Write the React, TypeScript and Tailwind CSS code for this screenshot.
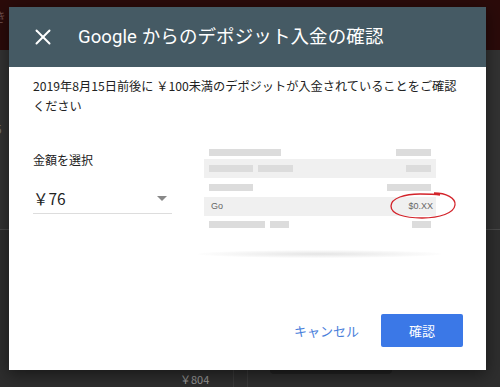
import { X } from "lucide-react";

const jp = { fontFamily: '"Noto Sans CJK JP", "Noto Sans", sans-serif' };

function Bar({ w }: { w: number }) {
  return <div className="h-[7px] bg-[#dcdcdc]" style={{ width: w }} />;
}

// 入金確認のイラスト (ぼかした明細)
function StatementSketch() {
  return (
    <div className="relative w-[232px] flex flex-col">
      <div className="flex justify-between items-center h-[13px] px-[5px]">
        <Bar w={72} />
        <Bar w={35} />
      </div>
      <div className="flex justify-between items-center h-[19px] px-[5px] bg-[#f0f0f0]">
        <div className="flex gap-[5px]">
          <Bar w={44} />
          <Bar w={35} />
        </div>
        <Bar w={25} />
      </div>
      <div className="flex justify-between items-center h-[19px] px-[5px]">
        <Bar w={44} />
        <Bar w={44} />
      </div>
      <div className="relative flex justify-between items-center h-[19px] px-[7px] pr-[3px] bg-[#f0f0f0] text-[9px] text-[#666]" style={{ fontFamily: '"Liberation Sans", sans-serif' }}>
        <span>Go</span>
        <span>$0.XX</span>
        <svg className="absolute left-[184px] top-[-7px]" width="70" height="30" viewBox="0 0 70 30">
          <path d="M46 3 C58 3 68 8 67 15 C66 23 52 28 34 28 C16 28 3 24 3 16 C3 8 17 4 32 4 C40 4 46 4 52 5" fill="none" stroke="#d3232a" strokeWidth="1.3" />
        </svg>
      </div>
      <div className="flex justify-between items-center h-[17px] px-[5px]">
        <div className="flex gap-[5px]">
          <Bar w={56} />
          <Bar w={19} />
        </div>
        <Bar w={19} />
      </div>
      <div className="mt-[17px] mx-[-6px] h-[8px] rounded-[50%] bg-[radial-gradient(ellipse_at_center,#e4e4e4_0%,#f6f6f6_50%,#ffffff_75%)]" />
    </div>
  );
}

export default function App() {
  return (
    <div className="relative w-[500px] h-[387px] overflow-hidden bg-[#2f2f2f]" style={jp}>
      {/* background page behind the modal */}
      <div className="h-[50px] bg-[#2b0b0a] text-[#6a4a48] text-[12px] pl-0 pt-[8px] -ml-[6px]">き</div>
      <div className="h-[180px] bg-[#333333] border-b border-[#4a4a4a] text-[#777] text-[12px] pt-[70px] -ml-[5px]">5</div>
      <div className="relative h-[157px] bg-[#2e2e2e]">
        <div className="absolute left-[180px] top-[141px] text-[11px] text-[#9a9a9a]">￥804</div>
        <div className="absolute left-[233px] top-[140px] w-px h-[20px] bg-[#3a3a3a]" />
        <div className="absolute left-[247px] top-[140px] w-px h-[20px] bg-[#3a3a3a]" />
        <div className="absolute left-[270px] top-[133px] w-[122px] h-[11px] rounded-b-[4px] bg-[#222222]" />
      </div>

      {/* modal */}
      <div className="absolute left-[9px] top-[7px] w-[477px] h-[363px] bg-white flex flex-col shadow-[0_4px_16px_rgba(0,0,0,0.5)]">
        <div className="h-[60px] bg-[#455a64] flex items-center text-white shrink-0">
          <X className="ml-[21px] w-[26px] h-[26px]" strokeWidth={1.8} />
          <div className="ml-[22px] text-[18.5px] tracking-[0.1px]">
            <span style={{ fontFamily: 'Roboto, "Noto Sans CJK JP", sans-serif' }}>Google </span>
            からのデポジット入金の確認
          </div>
        </div>

        <div className="px-[24px] pt-[9px] text-[12.2px] leading-[20px] text-[#222]">
          2019年8月15日前後に ￥100未満のデポジットが入金されていることをご確認
          <br />
          ください
        </div>

        <div className="flex pl-[24px] mt-[23px]">
          <div className="w-[139px] pt-[12px]">
            <div className="text-[12px] text-[#222]">金額を選択</div>
            <div className="mt-[15px] h-[30px] flex items-center justify-between border-b border-[#dddddd]">
              <span className="text-[15.5px] text-[#222]">￥76</span>
              <span className="mr-[5px] w-0 h-0 border-l-[5px] border-r-[5px] border-t-[5px] border-l-transparent border-r-transparent border-t-[#888]" />
            </div>
          </div>
          <div className="ml-[32px] pt-[7px]">
            <StatementSketch />
          </div>
        </div>

        <div className="mt-auto mb-[23px] flex items-center justify-end gap-[22px] pr-[23px]">
          <button className="text-[13px] text-[#4a80db]">キャンセル</button>
          <button className="w-[82px] h-[33px] rounded-[2px] bg-[#3b78e7] text-white text-[13px]">確認</button>
        </div>
      </div>
    </div>
  );
}
